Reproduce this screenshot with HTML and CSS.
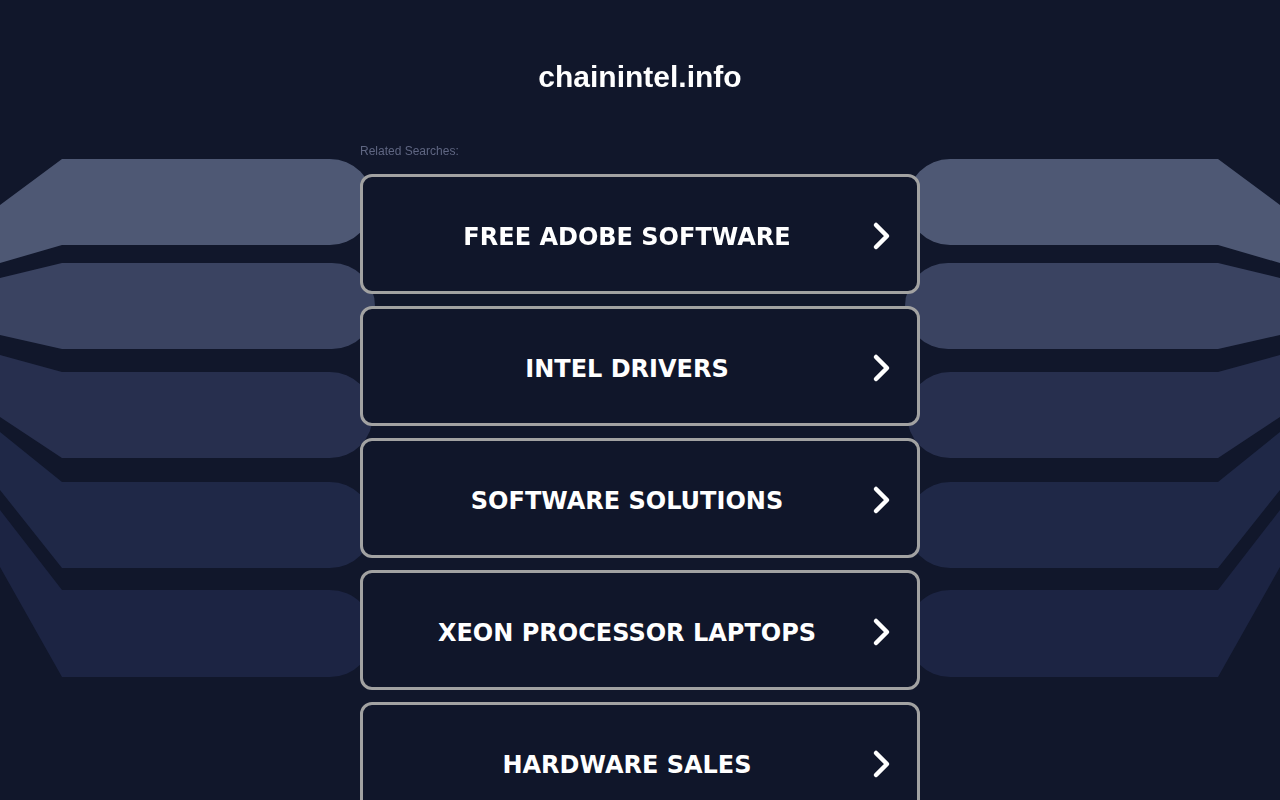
FILE: index.html
```html
<!DOCTYPE html>
<html lang="en">

<head>
    <meta charset="UTF-8">
    <meta name="viewport" content="width=device-width, initial-scale=1.0">
    <title>chainintel.info</title>
    <link rel="stylesheet" href="styles.css">
</head>

<body>
    <!-- layered panels behind the page -->
    <svg class="backdrop" viewBox="0 0 1280 800" preserveAspectRatio="none">
        <g id="panels">
            <path fill="#4e5874" d="M0,205 L62,159 H330 A43,43 0 0 1 330,245 H62 L0,263 Z" />
            <path fill="#3a4361" d="M0,278 L62,263 H332 A43,43 0 0 1 332,349 H62 L0,335 Z" />
            <path fill="#272f4e" d="M0,355 L62,372 H330 A43,43 0 0 1 330,458 H62 L0,417 Z" />
            <path fill="#1f2847" d="M0,432 L62,482 H330 A43,43 0 0 1 330,568 H62 L0,490 Z" />
            <path fill="#1c2443" d="M0,510 L62,590 H330 A43,43 0 0 1 330,677 H62 L0,567 Z" />
        </g>
        <use href="#panels" transform="translate(1280,0) scale(-1,1)" />
    </svg>

    <div class="header">
        <h1 class="domain">chainintel.info</h1>
    </div>

    <div class="results">
        <p class="label">Related Searches:</p>
        <div class="links">
            <a class="link" href="#"><span>FREE ADOBE SOFTWARE</span>
                <svg class="arrow" viewBox="0 0 20 30"><path d="M4,4 L15,15 L4,26" /></svg></a>
            <a class="link" href="#"><span>INTEL DRIVERS</span>
                <svg class="arrow" viewBox="0 0 20 30"><path d="M4,4 L15,15 L4,26" /></svg></a>
            <a class="link" href="#"><span>SOFTWARE SOLUTIONS</span>
                <svg class="arrow" viewBox="0 0 20 30"><path d="M4,4 L15,15 L4,26" /></svg></a>
            <a class="link" href="#"><span>XEON PROCESSOR LAPTOPS</span>
                <svg class="arrow" viewBox="0 0 20 30"><path d="M4,4 L15,15 L4,26" /></svg></a>
            <a class="link" href="#"><span>HARDWARE SALES</span>
                <svg class="arrow" viewBox="0 0 20 30"><path d="M4,4 L15,15 L4,26" /></svg></a>
        </div>
    </div>
</body>

</html>
```

FILE: styles.css
```css
body {
    margin: 0;
    background-color: #11172b;
    font-family: "Liberation Sans", Arial, sans-serif;
    color: #fff;
}

.backdrop {
    position: fixed;
    top: 0;
    left: 0;
    width: 100%;
    height: 800px;
    z-index: -1;
}

.header {
    padding-top: 60px;
    text-align: center;
}

.domain {
    margin: 0;
    font-size: 30px;
    line-height: 34px;
    font-weight: bold;
}

.results {
    width: 560px;
    margin: 0 auto;
}

.label {
    margin: 50px 0 16px;
    font-size: 12px;
    line-height: 14px;
    color: #5f6682;
}

.links {
    display: flex;
    flex-direction: column;
    gap: 12px;
}

.link {
    display: flex;
    align-items: center;
    height: 120px;
    box-sizing: border-box;
    padding: 0 25px 0 40px;
    background-color: #10162a;
    border: 3px solid #a2a2a2;
    border-radius: 12px;
    color: #fff;
    text-decoration: none;
}

.link span {
    flex: 1;
    margin-right: 21px;
    padding-top: 6px;
    text-align: center;
    font-family: "DejaVu Sans", Verdana, sans-serif;
    font-size: 24px;
    font-weight: bold;
}

.arrow {
    width: 20px;
    height: 30px;
    margin-top: 4px;
}

.arrow path {
    fill: none;
    stroke: #fff;
    stroke-width: 4.5;
    stroke-linecap: round;
    stroke-linejoin: round;
}
```
